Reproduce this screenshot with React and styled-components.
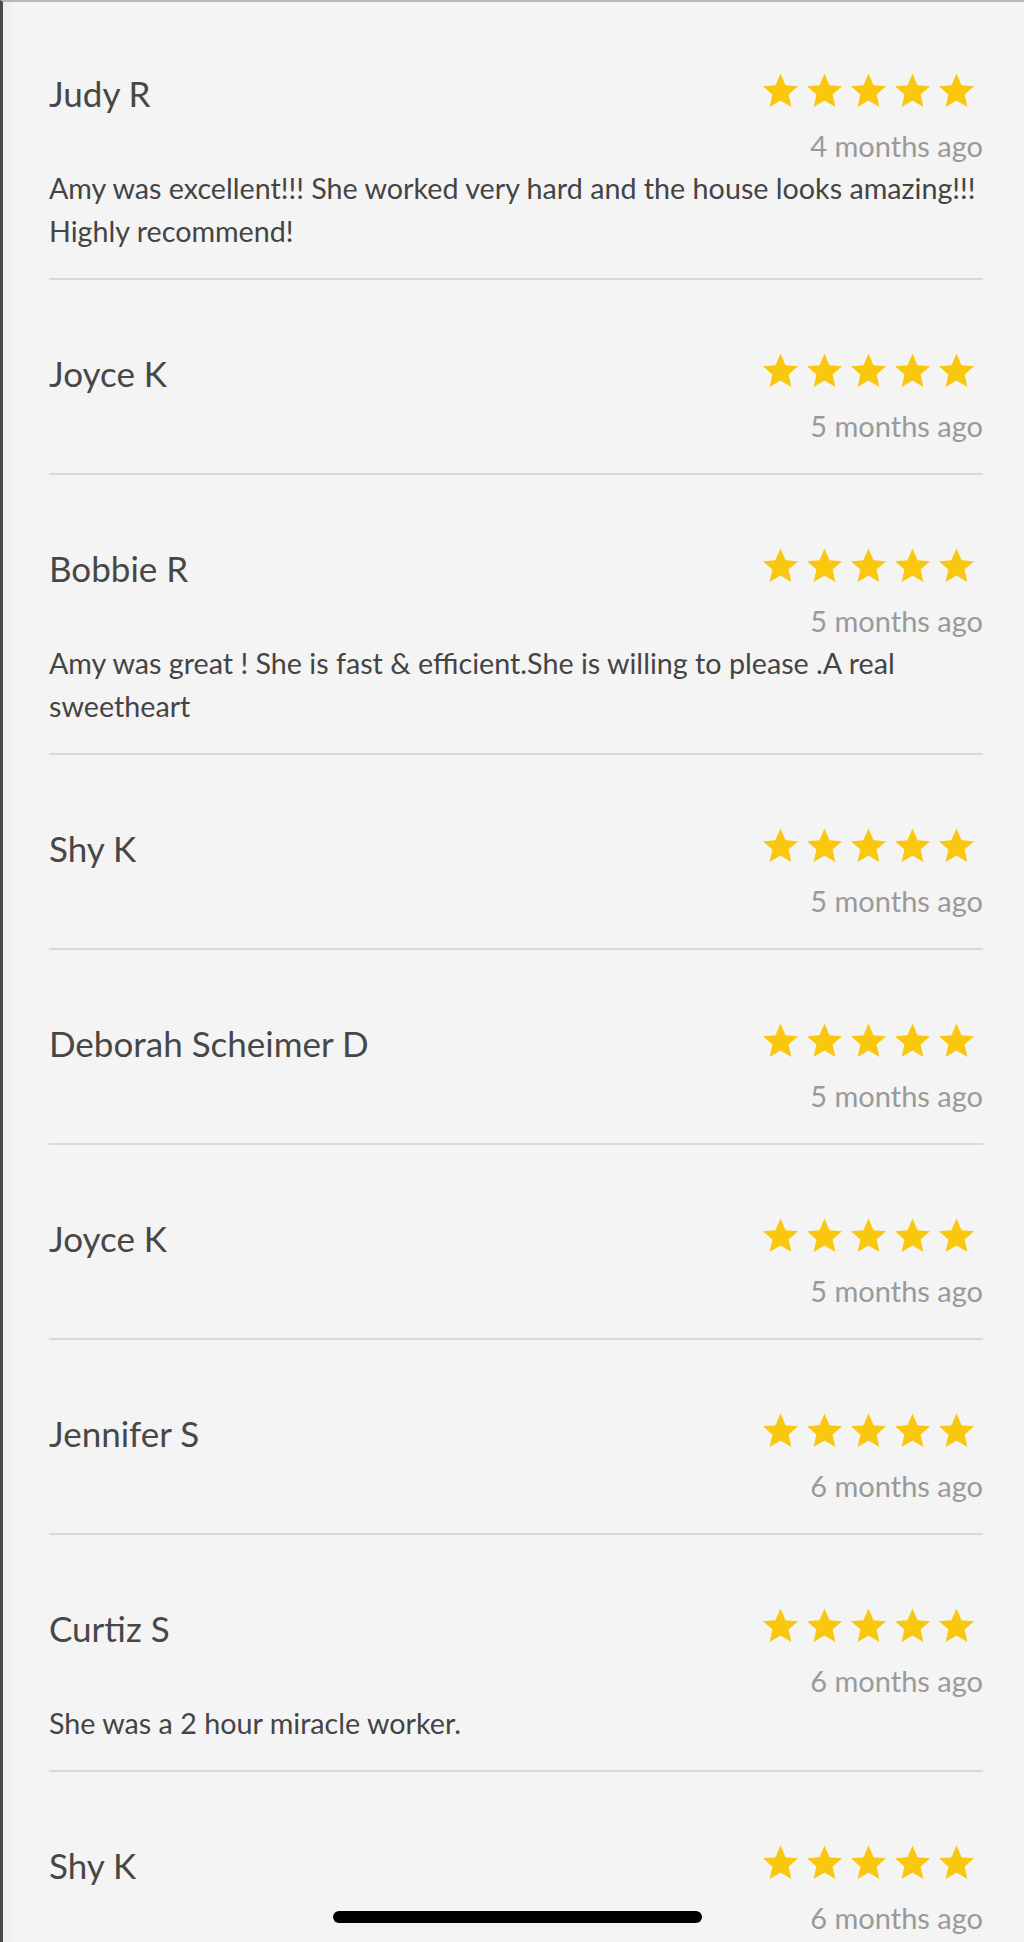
import React from 'react';
import styled, { createGlobalStyle } from 'styled-components';

const reviews = [
    { name: 'Judy R', when: '4 months ago', text: 'Amy was excellent!!! She worked very hard and the house looks amazing!!! Highly recommend!' },
    { name: 'Joyce K', when: '5 months ago' },
    { name: 'Bobbie R', when: '5 months ago', text: 'Amy was great ! She is fast & efficient.She is willing to please .A real sweetheart' },
    { name: 'Shy K', when: '5 months ago' },
    { name: 'Deborah Scheimer D', when: '5 months ago' },
    { name: 'Joyce K', when: '5 months ago' },
    { name: 'Jennifer S', when: '6 months ago' },
    { name: 'Curtiz S', when: '6 months ago', text: 'She was a 2 hour miracle worker.' },
    { name: 'Shy K', when: '6 months ago' },
];

function Star() {
    return (
        <StarIcon viewBox="0 0 24 24">
            <path d="M12 1.6l3.1 7.1 7.7.7-5.8 5.1 1.7 7.6L12 18.1l-6.7 4 1.7-7.6-5.8-5.1 7.7-.7z" />
        </StarIcon>
    );
}

function Review({ name, when, text }) {
    return (
        <Item>
            <Head>
                <Name>{name}</Name>
                <Side>
                    <Stars>
                        {[0, 1, 2, 3, 4].map(i => <Star key={i} />)}
                    </Stars>
                    <When>{when}</When>
                </Side>
            </Head>
            {text && <Body>{text}</Body>}
        </Item>
    );
}

export default function App() {
    return (
        <>
            <Global />
            <Screen>
                <List>
                    {reviews.map((r, i) => <Review key={i} {...r} />)}
                </List>
                <HomeBar />
            </Screen>
        </>
    );
}

const Global = createGlobalStyle`
    html, body {
        margin: 0;
        padding: 0;
        background: #f4f4f4;
    }
    body {
        font-family: Lato, 'Open Sans', sans-serif;
        -webkit-font-smoothing: antialiased;
    }
`

const Screen = styled.div`
    position: relative;
    height: 1942px;
    overflow: hidden;
    background: #f4f4f4;
    border-top: 2px solid #b8b8b8;
    border-left: 3px solid #4a4a4a;
    box-sizing: border-box;
`

const List = styled.div`
    display: flex;
    flex-direction: column;
    padding: 0 41px 0 36px;
    border-left: 10px solid #f0f0f0;
`

const Item = styled.div`
    display: flex;
    flex-direction: column;
    padding: 69px 0 25px;
    border-bottom: 2px solid #d9d9d9;
    & + & {
        padding-top: 71px;
    }
`

const Head = styled.div`
    display: flex;
    justify-content: space-between;
    align-items: flex-start;
`

const Name = styled.div`
    font-size: 35px;
    line-height: 45px;
    color: #474747;
`

const Side = styled.div`
    display: flex;
    flex-direction: column;
    align-items: flex-end;
`

const Stars = styled.div`
    display: flex;
    gap: 5px;
    margin-right: 7px;
    margin-bottom: 14px;
`

const StarIcon = styled.svg`
    width: 39px;
    height: 39px;
    fill: #f9c80e;
`

const When = styled.div`
    font-size: 29px;
    line-height: 44px;
    color: #9a9a9a;
`

const Body = styled.p`
    margin: -1px 0 0;
    font-size: 28.7px;
    line-height: 43px;
    color: #444;
`

const HomeBar = styled.div`
    position: absolute;
    left: 330px;
    bottom: 19px;
    width: 369px;
    height: 12px;
    border-radius: 6px;
    background: #000;
`
